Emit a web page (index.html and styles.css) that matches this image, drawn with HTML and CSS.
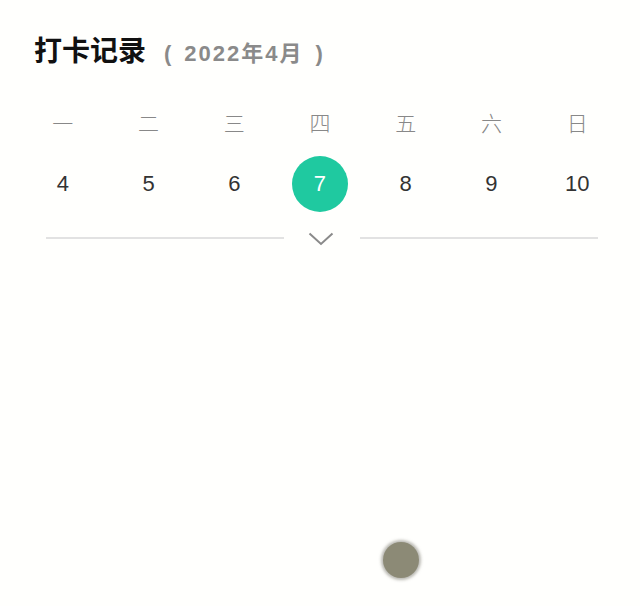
FILE: index.html
```html
<!DOCTYPE html>
<html lang="zh">
<head>
<meta charset="utf-8">
<link rel="stylesheet" href="styles.css">
</head>
<body>
<div class="page">
  <div class="title">
    <span class="main">打卡记录</span>
    <span class="sub"><span class="paren open">(</span><span class="month">2022年4月</span><span class="paren close">)</span></span>
  </div>
  <div class="week">
    <div class="cell">一</div><div class="cell">二</div><div class="cell">三</div><div class="cell">四</div><div class="cell">五</div><div class="cell">六</div><div class="cell">日</div>
  </div>
  <div class="dates">
    <div class="cell"><span class="d">4</span></div>
    <div class="cell"><span class="d">5</span></div>
    <div class="cell"><span class="d">6</span></div>
    <div class="cell"><span class="d active">7</span></div>
    <div class="cell"><span class="d">8</span></div>
    <div class="cell"><span class="d">9</span></div>
    <div class="cell"><span class="d">10</span></div>
  </div>
  <div class="divider">
    <div class="line"></div>
    <svg class="chev" width="26" height="14" viewBox="0 0 26 14"><path d="M1.5 1.5 L13 12 L24.5 1.5" fill="none" stroke="#8a8a8a" stroke-width="2"/></svg>
    <div class="line"></div>
  </div>
  <div class="touch-area">
    <div class="touch"></div>
  </div>
</div>
</body>
</html>
```
FILE: styles.css
```css
html, body {
  margin: 0;
  padding: 0;
  background: #fffffd;
}
.page {
  width: 640px;
  height: 606px;
  box-sizing: border-box;
  padding: 29px 20px 0;
  font-family: "Liberation Sans", Arial, "Noto Sans CJK SC", sans-serif;
}
.title {
  display: flex;
  align-items: baseline;
  padding-left: 14px;
  height: 38px;
}
.title .main {
  font-family: "Noto Sans CJK SC", sans-serif;
  font-size: 28px;
  font-weight: 700;
  color: #111;
}
.title .sub {
  margin-left: 18px;
  font-size: 22px;
  font-weight: 700;
  color: #8a8a8a;
  display: flex;
  align-items: baseline;
}
.month {
  letter-spacing: 2px;
}
.paren.open {
  margin-right: 13px;
}
.paren.close {
  margin-left: 12px;
}
.week {
  display: grid;
  grid-template-columns: repeat(7, 1fr);
  margin-top: 40px;
  height: 30px;
  align-items: center;
}
.week .cell {
  text-align: center;
  font-family: "Noto Sans CJK SC", sans-serif;
  font-size: 21px;
  font-weight: 300;
  color: #888;
  line-height: 30px;
}
.dates {
  display: grid;
  grid-template-columns: repeat(7, 1fr);
  margin-top: 18px;
  height: 58px;
  align-items: center;
}
.dates .cell {
  display: flex;
  justify-content: center;
}
.d {
  width: 56px;
  height: 56px;
  border-radius: 50%;
  display: flex;
  align-items: center;
  justify-content: center;
  font-size: 22px;
  color: #333;
}
.d.active {
  background: #1fc9a0;
  color: #fff;
}
.divider {
  display: flex;
  align-items: flex-start;
  padding: 0 22px 0 26px;
  margin-top: 19px;
  height: 14px;
}
.line {
  flex: 1;
  height: 2px;
  background: #e2e2e2;
  margin-top: 5px;
}
.chev {
  margin: 0 26px 0 24px;
}
.touch-area {
  display: flex;
  justify-content: flex-start;
  padding-left: 363px;
  margin-top: 296px;
}
.touch {
  width: 36px;
  height: 36px;
  border-radius: 50%;
  background: #8c8a76;
  box-shadow: 0 0 3px 2px rgba(140, 138, 130, 0.6);
}
```
